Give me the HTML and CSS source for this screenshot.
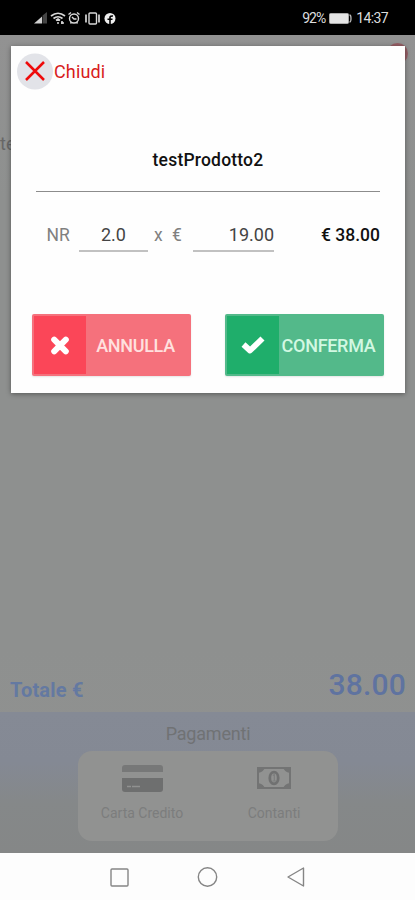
FILE: index.html
```html
<!DOCTYPE html>
<html lang="it">
<head>
<meta charset="utf-8">
<title>Prodotto</title>
<link rel="stylesheet" href="styles.css">
</head>
<body>
<div class="phone">
  <header class="status">
    <div class="status-icons">
      <svg width="84" height="14" viewBox="0 0 84 14" fill="none" stroke="#d8d8d8" stroke-width="1.4">
        <path d="M1 12.500L9 5.500V12.500Z" fill="#d0d0d0" stroke="none"/>
        <path d="M9.500 12.500V4.500L14 1V12.500Z" fill="#444" stroke="none"/>
        <path d="M18 5Q25-.5 32 5M20.500 7.500Q25 4 29.500 7.500M23 9.500L25 8L27 9.500" stroke-width="1.700"/>
        <path d="M24 12h2M28 12h3M29 10v3" stroke-width="1.600"/>
        <circle cx="41" cy="7.500" r="4.500"/>
        <path d="M35.500 3.500L38 1.500M44 1.500L46.500 3.500M39 6L41 8H43.500M37.500 12.500l1-1.500M44.500 12.500L43.500 11"/>
        <rect x="56" y="2" width="7.500" height="11" rx="1"/>
        <path d="M53 3.500V11.500M66 3.500V11.500" stroke-width="1.700"/>
        <circle cx="77" cy="7.500" r="5.500" fill="#eee" stroke="none"/>
        <path d="M77 13V6.500Q77 4.700 80 5M74.500 8.300H79.500" stroke="#000" stroke-width="1.600"/>
      </svg>
    </div>
    <div class="status-right">
      <span class="percent">92%</span>
      <svg width="23" height="11" viewBox="0 0 23 11"><rect x=".5" y=".5" width="19" height="10" rx="1" fill="#e4e4e4" stroke="#aaa"/><path d="M20.500 2Q22 2 22 5.500T20.500 9" fill="none" stroke="#bbb" stroke-width="1.300"/></svg>
      <span class="clock">14:37</span>
    </div>
  </header>

  <main class="screen">
    <span class="badge"></span>
    <div class="list"><span class="list-item">testProdotto2</span></div>
    <div class="total"><span class="total-label">Totale €</span><span class="total-value">38.00</span></div>
    <section class="payments">
      <h2 class="payments-title">Pagamenti</h2>
      <div class="methods">
        <div class="method">
          <svg width="41" height="27" viewBox="0 0 41 27"><path d="M3 0H38Q41 0 41 3V7H0V3Q0 0 3 0Z" fill="#777878"/><path d="M0 13H41V24Q41 27 38 27H3Q0 27 0 24Z" fill="#6e6f6f"/><path d="M5 21.500H9M10 21.500H18" stroke="#909190" stroke-width="1.500"/></svg>
          <span class="method-name">Carta Credito</span>
        </div>
        <div class="method">
          <svg width="34" height="27" viewBox="0 0 34 27"><rect x="1" y="4" width="32" height="20" fill="none" stroke="#737474" stroke-width="2"/><path d="M1 3H8Q7 8 1 9ZM33 3H26Q27 8 33 9ZM1 25V19Q7 20 8 25ZM33 25V19Q27 20 26 25Z" fill="#737474"/><ellipse cx="17" cy="14" rx="4.200" ry="5.800" fill="none" stroke="#707171" stroke-width="2.800"/><path d="M15.800 11.500L17.300 10.500V17M15.500 17H19" fill="none" stroke="#7d7e7e" stroke-width="1.200"/></svg>
          <span class="method-name">Contanti</span>
        </div>
      </div>
    </section>
  </main>

  <nav class="navbar">
    <svg width="415" height="47" viewBox="0 0 415 47" fill="none" stroke="#858585" stroke-width="1.400">
      <rect x="111" y="16" width="17" height="17" rx="1"/>
      <circle cx="207.500" cy="24" r="9.200"/>
      <path d="M303.500 15V33L288 24Z" stroke-linejoin="round"/>
    </svg>
  </nav>

  <div class="dialog">
    <button class="close">
      <svg width="37" height="37" viewBox="0 0 37 37"><circle cx="18" cy="18.500" r="18" fill="#e2e3e8"/><path d="M9 9L27 27M27 9L9 27" stroke="#ee0b0b" stroke-width="2.500"/></svg>
      <span class="close-text">Chiudi</span>
    </button>
    <h1 class="product">testProdotto2</h1>
    <div class="amounts">
      <span class="unit nr">NR</span>
      <span class="field qty">2.0</span>
      <span class="unit times">x</span>
      <span class="unit euro">€</span>
      <span class="field price">19.00</span>
      <span class="sum">€ 38.00</span>
    </div>
    <div class="actions">
      <button class="action cancel">
        <span class="action-icon"><svg width="20" height="20" viewBox="0 0 20 20"><path d="M4.200 4.700L15.800 16.300M15.800 4.700L4.200 16.300" stroke="#fff" stroke-width="6" stroke-linecap="round"/></svg></span>
        <span class="action-text">ANNULLA</span>
      </button>
      <button class="action confirm">
        <span class="action-icon"><svg width="26" height="20" viewBox="0 0 26 20"><path d="M3.500 9.500L10 15.500L22.500 3.500" fill="none" stroke="#fff" stroke-width="5.800" stroke-linejoin="round"/></svg></span>
        <span class="action-text">CONFERMA</span>
      </button>
    </div>
  </div>
</div>
</body>
</html>
```
FILE: styles.css
```css
* { box-sizing: border-box; }
body { margin: 0; font-family: Roboto, "Liberation Sans", sans-serif; }
h1, h2 { margin: 0; font-weight: 400; }
button { border: 0; padding: 0; background: none; font-family: inherit; }
svg { display: block; flex: none; }
span { white-space: nowrap; }
.phone { position: relative; width: 415px; height: 900px; display: flex; flex-direction: column; overflow: hidden; }
.status { height: 35px; background: #000; display: flex; justify-content: space-between; padding: 11px 27px 0 33px; }
.status-right { display: flex; height: 14px; align-items: center; color: #ddd; font-size: 14px; }
.percent { width: 27px; letter-spacing: -0.9px; }
.clock { margin-left: 4px; letter-spacing: -0.6px; }
.screen { position: relative; flex: 1; display: flex; flex-direction: column; background: linear-gradient(#929292, #8e908f 20%, #8e908f 75%, #919291); }
.badge { position: absolute; left: 387px; top: 8px; width: 21px; height: 21px; border-radius: 50%; background: #965e65; }
.list { flex: 1; padding-top: 98px; }
.list-item { font-size: 18px; color: #676767; }
.total { height: 54px; display: flex; justify-content: space-between; padding: 0 9px 0 10px; color: #5f73a0; font-weight: 500; }
.total-label { font-size: 20px; line-height: 24px; padding-top: 20px; letter-spacing: .2px; color: #6479a1; font-weight: 700; }
.total-value { font-size: 30px; line-height: 36px; padding-top: 9px; letter-spacing: .2px; }
.payments { height: 141px; padding-top: 11px; background: linear-gradient(#858a95, #848994 35%, #858889 65%, #858787); display: flex; flex-direction: column; align-items: center; }
.payments-title { font-size: 18px; line-height: 21px; color: #707274; letter-spacing: -.2px; margin-left: 1px; }
.methods { width: 260px; height: 90px; margin-top: 7px; margin-left: 1px; border-radius: 14px; background: #919291; display: flex; justify-content: space-between; }
.method { width: 128px; padding-top: 14px; display: flex; flex-direction: column; align-items: center; }
.method + .method { padding-top: 13px; }
.method + .method .method-name { margin-top: 13px; }
.method-name { margin-top: 12px; font-size: 14px; line-height: 18px; color: #7c7d7d; }
.navbar { height: 47px; background: #fdfdfd; }
.dialog { position: absolute; left: 11px; top: 46px; width: 394px; height: 347px; background: #fefefe; box-shadow: 0 1px 5px rgba(0,0,0,.4); display: flex; flex-direction: column; }
.close { display: flex; align-items: center; align-self: flex-start; height: 37px; margin: 7px 0 0 6px; color: #d81c1c; }
.close-text { font-size: 18px; line-height: 22px; letter-spacing: .15px; }
.product { margin: 58px 25px 0; height: 44px; border-bottom: 1px solid #8c8c8c; font-size: 17.500px; line-height: 24px; font-weight: 500; text-align: center; letter-spacing: .2px; color: #111; }
.amounts { margin: 29px 25px 0; height: 31px; display: flex; font-size: 18px; line-height: 29px; }
.unit { color: #808080; font-size: 17.500px; }
.nr { width: 43px; padding-left: 10.500px; }
.field { height: 31px; border-bottom: 2px solid #c1c1c1; color: #444; line-height: 28px; }
.qty { width: 69px; text-align: center; }
.times { margin-left: 6px; width: 18px; }
.euro { width: 21px; }
.price { width: 81px; text-align: right; }
.sum { margin-left: auto; font-weight: 500; font-size: 17.500px; color: #111; }
.actions { margin: 62px 21px 0; display: flex; justify-content: space-between; }
.action { width: 159px; height: 62px; border-radius: 2px; display: flex; padding: 2px; color: #fff; box-shadow: 0 1px 2px rgba(0,0,0,.1); }
.action-icon { width: 52px; height: 58px; display: flex; align-items: center; justify-content: center; }
.action-text { flex: 1; line-height: 60px; text-align: center; font-size: 18px; font-weight: 500; letter-spacing: -.3px; padding-right: 4px; }
.cancel { background: #f5717c; }
.cancel .action-icon { background: #fb4658; }
.cancel .action-text { color: #ffe0df; }
.confirm { background: #53b98a; }
.confirm .action-icon { background: #1fae6b; }
.confirm .action-text { color: #d2f8e2; }
```
